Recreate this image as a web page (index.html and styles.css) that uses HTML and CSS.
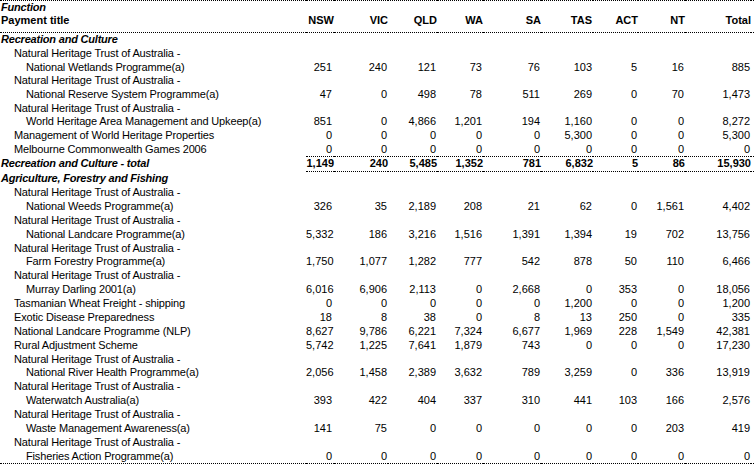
FILE: index.html
```html
<!doctype html>
<html>
	<head>
		<meta charset="utf-8"/>
		<title>Payments by function</title>
		<link rel="stylesheet" href="styles.css">
	</head>
	<body>
		<table class="pay">
			<colgroup>
				<col class="c-title"><col class="c-nsw"><col class="c-vic"><col class="c-qld"><col class="c-wa"><col class="c-sa"><col class="c-tas"><col class="c-act"><col class="c-nt"><col class="c-total"><col class="c-end">
			</colgroup>
			<!-- header -->
			<tbody class="head">
				<tr class="head1">
					<td class="sec">Function</td>
					<td></td><td></td><td></td><td></td><td></td><td></td><td></td><td></td><td></td><td></td>
				</tr>
				<tr class="head2">
					<td class="hd">Payment title</td>
					<td class="hn nsw">NSW</td><td class="hn">VIC</td><td class="hn">QLD</td><td class="hn">WA</td><td class="hn">SA</td><td class="hn tas">TAS</td><td class="hn">ACT</td><td class="hn">NT</td><td class="hn">Total</td><td></td>
				</tr>
			</tbody>
			<!-- recreation and culture -->
			<tbody class="sec1">
				<tr><td class="sec">Recreation and Culture</td><td colspan="10"></td></tr>
				<tr><td class="l1">Natural Heritage Trust of Australia -</td><td colspan="10"></td></tr>
				<tr><td class="l2">National Wetlands Programme(a)</td><td class="n nsw">251</td><td class="n">240</td><td class="n">121</td><td class="n">73</td><td class="n">76</td><td class="n">103</td><td class="n">5</td><td class="n">16</td><td class="n">885</td><td></td></tr>
				<tr><td class="l1">Natural Heritage Trust of Australia -</td><td colspan="10"></td></tr>
				<tr><td class="l2">National Reserve System Programme(a)</td><td class="n nsw">47</td><td class="n">0</td><td class="n">498</td><td class="n">78</td><td class="n">511</td><td class="n">269</td><td class="n">0</td><td class="n">70</td><td class="n">1,473</td><td></td></tr>
				<tr><td class="l1">Natural Heritage Trust of Australia -</td><td colspan="10"></td></tr>
				<tr><td class="l2">World Heritage Area Management and Upkeep(a)</td><td class="n nsw">851</td><td class="n">0</td><td class="n">4,866</td><td class="n">1,201</td><td class="n">194</td><td class="n">1,160</td><td class="n">0</td><td class="n">0</td><td class="n">8,272</td><td></td></tr>
				<tr><td class="l1">Management of World Heritage Properties</td><td class="n nsw">0</td><td class="n">0</td><td class="n">0</td><td class="n">0</td><td class="n">0</td><td class="n">5,300</td><td class="n">0</td><td class="n">0</td><td class="n">5,300</td><td></td></tr>
				<tr><td class="l1">Melbourne Commonwealth Games 2006</td><td class="n nsw">0</td><td class="n">0</td><td class="n">0</td><td class="n">0</td><td class="n">0</td><td class="n">0</td><td class="n">0</td><td class="n">0</td><td class="n">0</td><td></td></tr>
				<tr class="total"><td class="sec">Recreation and Culture - total</td><td class="t">1,149</td><td class="t">240</td><td class="t">5,485</td><td class="t">1,352</td><td class="t">781</td><td class="t">6,832</td><td class="t">5</td><td class="t">86</td><td class="t">15,930</td><td class="t"></td></tr>
			</tbody>
			<!-- agriculture, forestry and fishing -->
			<tbody class="sec2">
				<tr><td class="sec">Agriculture, Forestry and Fishing</td><td colspan="10"></td></tr>
				<tr><td class="l1">Natural Heritage Trust of Australia -</td><td colspan="10"></td></tr>
				<tr><td class="l2">National Weeds Programme(a)</td><td class="n nsw">326</td><td class="n">35</td><td class="n">2,189</td><td class="n">208</td><td class="n">21</td><td class="n">62</td><td class="n">0</td><td class="n">1,561</td><td class="n">4,402</td><td></td></tr>
				<tr><td class="l1">Natural Heritage Trust of Australia -</td><td colspan="10"></td></tr>
				<tr><td class="l2">National Landcare Programme(a)</td><td class="n nsw">5,332</td><td class="n">186</td><td class="n">3,216</td><td class="n">1,516</td><td class="n">1,391</td><td class="n">1,394</td><td class="n">19</td><td class="n">702</td><td class="n">13,756</td><td></td></tr>
				<tr><td class="l1">Natural Heritage Trust of Australia -</td><td colspan="10"></td></tr>
				<tr><td class="l2">Farm Forestry Programme(a)</td><td class="n nsw">1,750</td><td class="n">1,077</td><td class="n">1,282</td><td class="n">777</td><td class="n">542</td><td class="n">878</td><td class="n">50</td><td class="n">110</td><td class="n">6,466</td><td></td></tr>
				<tr><td class="l1">Natural Heritage Trust of Australia -</td><td colspan="10"></td></tr>
				<tr><td class="l2">Murray Darling 2001(a)</td><td class="n nsw">6,016</td><td class="n">6,906</td><td class="n">2,113</td><td class="n">0</td><td class="n">2,668</td><td class="n">0</td><td class="n">353</td><td class="n">0</td><td class="n">18,056</td><td></td></tr>
				<tr><td class="l1">Tasmanian Wheat Freight - shipping</td><td class="n nsw">0</td><td class="n">0</td><td class="n">0</td><td class="n">0</td><td class="n">0</td><td class="n">1,200</td><td class="n">0</td><td class="n">0</td><td class="n">1,200</td><td></td></tr>
				<tr><td class="l1">Exotic Disease Preparedness</td><td class="n nsw">18</td><td class="n">8</td><td class="n">38</td><td class="n">0</td><td class="n">8</td><td class="n">13</td><td class="n">250</td><td class="n">0</td><td class="n">335</td><td></td></tr>
				<tr><td class="l1">National Landcare Programme (NLP)</td><td class="n nsw">8,627</td><td class="n">9,786</td><td class="n">6,221</td><td class="n">7,324</td><td class="n">6,677</td><td class="n">1,969</td><td class="n">228</td><td class="n">1,549</td><td class="n">42,381</td><td></td></tr>
				<tr><td class="l1">Rural Adjustment Scheme</td><td class="n nsw">5,742</td><td class="n">1,225</td><td class="n">7,641</td><td class="n">1,879</td><td class="n">743</td><td class="n">0</td><td class="n">0</td><td class="n">0</td><td class="n">17,230</td><td></td></tr>
				<tr><td class="l1">Natural Heritage Trust of Australia -</td><td colspan="10"></td></tr>
				<tr><td class="l2">National River Health Programme(a)</td><td class="n nsw">2,056</td><td class="n">1,458</td><td class="n">2,389</td><td class="n">3,632</td><td class="n">789</td><td class="n">3,259</td><td class="n">0</td><td class="n">336</td><td class="n">13,919</td><td></td></tr>
				<tr><td class="l1">Natural Heritage Trust of Australia -</td><td colspan="10"></td></tr>
				<tr><td class="l2">Waterwatch Australia(a)</td><td class="n nsw">393</td><td class="n">422</td><td class="n">404</td><td class="n">337</td><td class="n">310</td><td class="n">441</td><td class="n">103</td><td class="n">166</td><td class="n">2,576</td><td></td></tr>
				<tr><td class="l1">Natural Heritage Trust of Australia -</td><td colspan="10"></td></tr>
				<tr><td class="l2">Waste Management Awareness(a)</td><td class="n nsw">141</td><td class="n">75</td><td class="n">0</td><td class="n">0</td><td class="n">0</td><td class="n">0</td><td class="n">0</td><td class="n">203</td><td class="n">419</td><td></td></tr>
				<tr><td class="l1">Natural Heritage Trust of Australia -</td><td colspan="10"></td></tr>
				<tr class="last"><td class="l2">Fisheries Action Programme(a)</td><td class="n nsw">0</td><td class="n">0</td><td class="n">0</td><td class="n">0</td><td class="n">0</td><td class="n">0</td><td class="n">0</td><td class="n">0</td><td class="n">0</td><td></td></tr>
			</tbody>
		</table>
	</body>
</html>
```

FILE: styles.css
```css
body{
	margin:0;
	background:#fff;
	color:#000;
	font-family:"Liberation Sans",Arial,sans-serif;
	font-size:11px;
}
/* main table */
.pay{
	table-layout:fixed;
	border-collapse:collapse;
	width:754px;
}
.pay td{
	padding:0;
	line-height:13px;
	white-space:nowrap;
	vertical-align:middle;
}
.sec1 td{height:13.67px;}
.sec2 td{height:13.86px;}
.c-title{width:306px;}
.c-nsw{width:28px;}
.c-vic{width:54px;}
.c-qld{width:49px;}
.c-wa{width:46px;}
.c-sa{width:58px;}
.c-tas{width:52px;}
.c-act{width:45px;}
.c-nt{width:47px;}
.c-total{width:66px;}
.c-end{width:3px;}

/* header rows */
.head1 td{
	border-top:1px dotted #000;
	height:11px;
	vertical-align:top;
}
.head2 td{
	border-bottom:1px dotted #000;
	height:18px;
	vertical-align:top;
}
.hd{
	font-weight:bold;
	padding-left:1px !important;
}
.hn{
	font-weight:bold;
	text-align:right;
}
.hn.tas{padding-right:1px !important;}

/* labels */
.sec{
	font-weight:bold;
	font-style:italic;
	letter-spacing:-0.2px;
	padding-left:1px !important;
}
.l1,.l2{letter-spacing:-0.15px;}
.l1{padding-left:14px !important;}
.l2{padding-left:26px !important;}

/* numbers */
.n{
	text-align:right;
	padding-right:1px !important;
}
.n.nsw{padding-right:2px !important;}

.sec1 .total td{height:14px;}
.total .t{
	font-weight:bold;
	text-align:right;
	border-top:1px dotted #000;
	border-bottom:1px dotted #000;
}
.last td{border-bottom:1px dotted #000;}
```
